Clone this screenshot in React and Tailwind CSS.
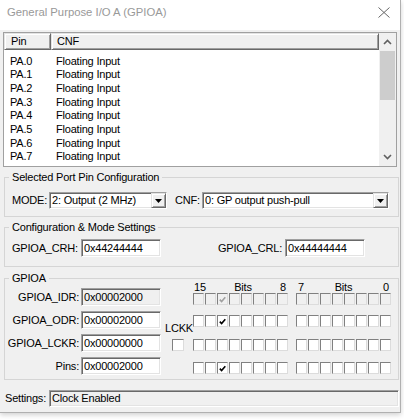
import React from 'react';

// Windows classic 3D edges
const sunken =
    'border border-t-[#a0a0a0] border-l-[#a0a0a0] border-r-white border-b-white shadow-[inset_1px_1px_0_#696969,inset_-1px_-1px_0_#e3e3e3]';
const raised =
    'border border-t-[#e3e3e3] border-l-[#e3e3e3] border-r-[#696969] border-b-[#696969] shadow-[inset_1px_1px_0_#ffffff,inset_-1px_-1px_0_#a0a0a0] bg-[#f0f0f0]';

const pins = ['PA.0', 'PA.1', 'PA.2', 'PA.3', 'PA.4', 'PA.5', 'PA.6', 'PA.7'];

function Combo({ className, value }) {
    return (
        <div className={`flex h-[17px] items-stretch bg-white ${sunken} ${className}`}>
            <span className="flex-1 truncate pl-[2px] leading-[15px]">{value}</span>
            <span className={`flex w-[15px] items-center justify-center ${raised}`}>
                <svg width="7" height="4" viewBox="0 0 7 4">
                    <polygon points="0,0 7,0 3.5,4" fill="#000" />
                </svg>
            </span>
        </div>
    );
}

function Edit({ value, readOnly }) {
    return (
        <div className={`flex h-[18px] w-[80px] items-center pl-[2px] ${readOnly ? 'bg-[#f0f0f0]' : 'bg-white'} ${sunken}`}>
            {value}
        </div>
    );
}

function Check({ checked, disabled }) {
    return (
        <div
            className={`flex h-[12px] w-[11px] items-center justify-center border border-t-[#808080] border-l-[#808080] border-r-[#dcdcdc] border-b-[#dcdcdc] ${disabled ? 'bg-[#f0f0f0]' : 'bg-white'}`}
        >
            {checked && (
                <svg width="7" height="7" viewBox="0 0 7 7">
                    <path d="M0.8 3.6 L2.6 5.5 L6.3 1.2" fill="none" stroke={disabled ? '#a0a0a0' : '#000'} strokeWidth="1.6" />
                </svg>
            )}
        </div>
    );
}

function BitRow({ bit13, disabled, className }) {
    const group = (offset) => (
        <div className="flex gap-[1px]">
            {Array.from({ length: 8 }).map((_, i) => (
                <Check key={i} checked={offset === 0 && i === 2 && bit13} disabled={disabled} />
            ))}
        </div>
    );
    return (
        <div className={`flex gap-[8px] ${className}`}>
            {group(0)}
            {group(8)}
        </div>
    );
}

function Group({ title, className, children }) {
    return (
        <fieldset className={`ml-[4px] mr-[1px] border border-[#d5d5d5] ${className}`}>
            <legend className="ml-[4px] px-[3px] leading-[12px]">{title}</legend>
            {children}
        </fieldset>
    );
}

export default function App() {
    return (
        <div className="h-[420px] w-[404px] overflow-hidden bg-white font-['Liberation_Sans',Arial,sans-serif] text-[11px] tracking-[-0.2px] text-black">
            <div className="flex h-[413px] w-[401px] flex-col border-r border-b border-[#b0b0b0] bg-[#f0f0f0] shadow-[0_2px_5px_rgba(0,0,0,0.18)]">
                {/* Title bar */}
                <div className="flex h-[30px] shrink-0 items-start justify-between bg-white pl-[7px] pr-[10px] pt-[5px]">
                    <span className="text-[11.3px] leading-[15px] tracking-normal text-[#999]">General Purpose I/O A (GPIOA)</span>
                    <svg className="mt-[2px]" width="12" height="11" viewBox="0 0 12 11">
                        <path d="M0.5 0.5 L11.5 10.5 M11.5 0.5 L0.5 10.5" stroke="#666" strokeWidth="1" />
                    </svg>
                </div>

                {/* Pin list */}
                <div className="ml-[3px] mt-[2px] flex h-[135px] w-[394px] border border-[#a0a0a0] bg-white">
                    <div className="flex flex-1 flex-col">
                        <div className="flex h-[17px] shrink-0 bg-[#f0f0f0]">
                            <div className={`flex w-[47px] items-center pl-[6px] ${raised}`}>Pin</div>
                            <div className={`flex flex-1 items-center pl-[5px] ${raised}`}>CNF</div>
                        </div>
                        <div className="mt-[4px] flex flex-col">
                            {pins.map((p) => (
                                <div key={p} className="flex h-[13.7px] items-center">
                                    <span className="w-[47px] pl-[6px]">{p}</span>
                                    <span className="pl-[5px]">Floating Input</span>
                                </div>
                            ))}
                        </div>
                    </div>
                    {/* Scrollbar */}
                    <div className="flex w-[17px] flex-col bg-[#f0f0f0]">
                        <div className="flex h-[18px] items-center justify-center">
                            <svg width="9" height="6" viewBox="0 0 9 6">
                                <path d="M1 5 L4.5 1.5 L8 5" fill="none" stroke="#606060" strokeWidth="1.6" />
                            </svg>
                        </div>
                        <div className="mx-[1px] h-[49px] bg-[#cdcdcd]" />
                        <div className="flex-1" />
                        <div className="flex h-[18px] items-center justify-center">
                            <svg width="9" height="6" viewBox="0 0 9 6">
                                <path d="M1 1 L4.5 4.5 L8 1" fill="none" stroke="#606060" strokeWidth="1.6" />
                            </svg>
                        </div>
                    </div>
                </div>

                {/* Selected Port Pin Configuration */}
                <Group title="Selected Port Pin Configuration" className="mt-[4px] pb-[7px] pt-[9px]">
                    <div className="flex items-center pl-[7px]">
                        <span className="w-[37px]">MODE:</span>
                        <Combo className="w-[118px]" value="2: Output (2 MHz)" />
                        <span className="ml-[8px] w-[27px]">CNF:</span>
                        <Combo className="w-[187px]" value="0: GP output push-pull" />
                    </div>
                </Group>

                {/* Configuration & Mode Settings */}
                <Group title="Configuration & Mode Settings" className="mt-[4px] pb-[9px] pt-[6px]">
                    <div className="flex items-center pl-[7px]">
                        <span className="w-[69px]">GPIOA_CRH:</span>
                        <Edit value="0x44244444" />
                        <span className="ml-[57px] w-[67px]">GPIOA_CRL:</span>
                        <Edit value="0x44444444" />
                    </div>
                </Group>

                {/* GPIOA registers */}
                <Group title="GPIOA" className="mt-[5px] pb-[4px] pt-[4px]">
                    <div className="flex">
                        <div className="flex flex-col gap-[5px]">
                            {[
                                ['GPIOA_IDR:', '0x00002000', true],
                                ['GPIOA_ODR:', '0x00002000', false],
                                ['GPIOA_LCKR:', '0x00000000', false],
                                ['Pins:', '0x00002000', false],
                            ].map(([label, value, ro]) => (
                                <div key={label} className="flex items-center">
                                    <span className="w-[74px] text-right">{label}</span>
                                    <span className="ml-[2px]">
                                        <Edit value={value} readOnly={ro} />
                                    </span>
                                </div>
                            ))}
                        </div>

                        <div className="ml-[4px] flex w-[28px] flex-col">
                            <span className="mt-[34px] leading-[12px]">LCKK</span>
                            <div className="ml-[7px] mt-[5px] w-[12px]">
                                <div className="flex h-[12px] w-[12px] border border-t-[#808080] border-l-[#808080] border-r-[#dcdcdc] border-b-[#dcdcdc] bg-white" />
                            </div>
                        </div>

                        <div className="mt-[-6px] flex flex-col">
                            <div className="flex h-[11px] gap-[8px] leading-[11px]">
                                <div className="flex w-[95px] justify-between pl-[1px] pr-[2px]">
                                    <span>15</span>
                                    <span>Bits</span>
                                    <span>8</span>
                                </div>
                                <div className="flex w-[95px] justify-between pl-[2px] pr-[2px]">
                                    <span>7</span>
                                    <span>Bits</span>
                                    <span>0</span>
                                </div>
                            </div>
                            <BitRow bit13 disabled />
                            <BitRow bit13 className="mt-[10px]" />
                            <BitRow className="mt-[12px]" />
                            <BitRow bit13 className="mt-[11px]" />
                        </div>
                    </div>
                </Group>

                {/* Status */}
                <div className="mt-[10px] flex items-center pl-[5px]">
                    <span className="w-[44px]">Settings:</span>
                    <div className={`flex h-[17px] w-[350px] items-center pl-[2px] bg-[#f0f0f0] ${sunken}`}>Clock Enabled</div>
                </div>
            </div>
        </div>
    );
}
